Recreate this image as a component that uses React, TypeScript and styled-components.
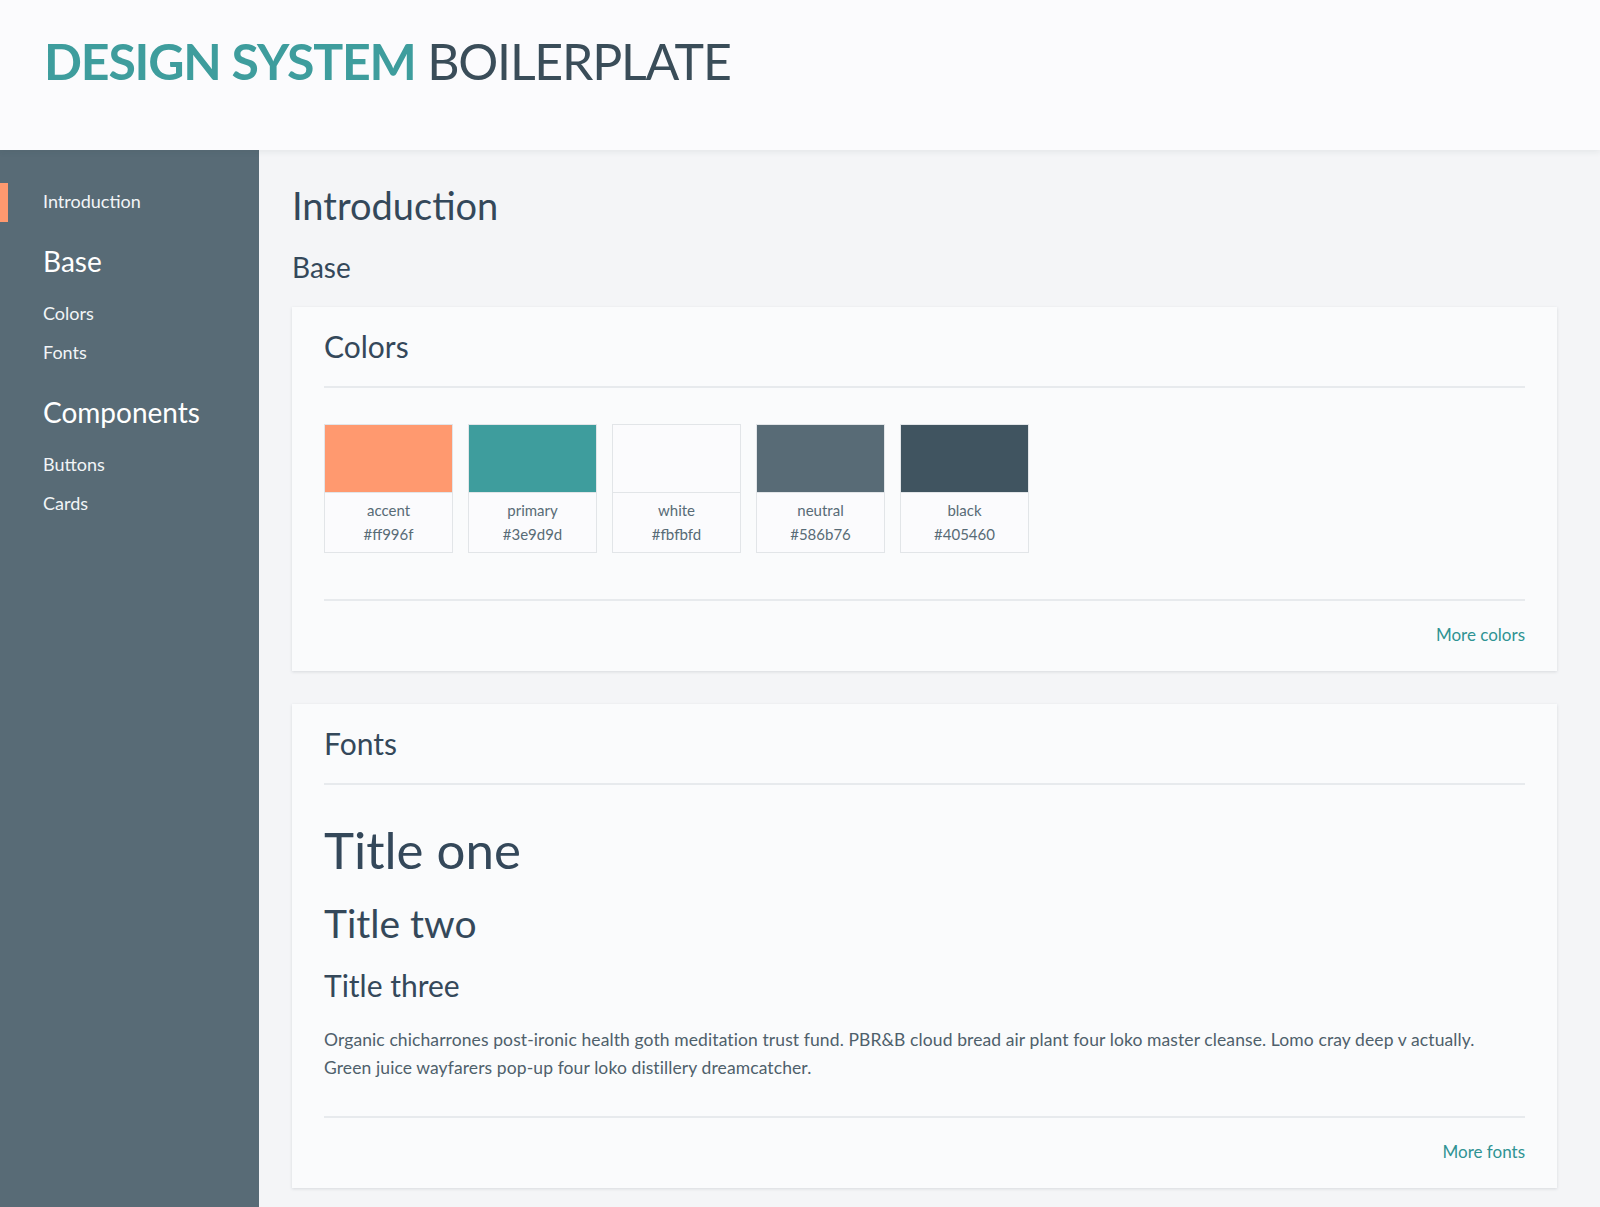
import React from "react";
import styled, { createGlobalStyle } from "styled-components";

const GlobalStyle = createGlobalStyle`
  * { box-sizing: border-box; }
  body {
    margin: 0;
    background: #f4f5f7;
    font-family: Lato, "Liberation Sans", sans-serif;
    color: #3a4d59;
  }
`;

const swatches = [
  { name: "accent", hex: "#ff996f" },
  { name: "primary", hex: "#3e9d9d" },
  { name: "white", hex: "#fbfbfd" },
  { name: "neutral", hex: "#586b76" },
  { name: "black", hex: "#405460" },
];

export default function App() {
  return (
    <>
      <GlobalStyle />
      <Header>
        <Brand>
          <strong>DESIGN SYSTEM</strong> BOILERPLATE
        </Brand>
      </Header>
      <Layout>
        <Sidebar>
          <NavLink $active>Introduction</NavLink>
          <NavGroup>Base</NavGroup>
          <NavLink>Colors</NavLink>
          <NavLink>Fonts</NavLink>
          <NavGroup>Components</NavGroup>
          <NavLink>Buttons</NavLink>
          <NavLink>Cards</NavLink>
        </Sidebar>
        <Main>
          <PageTitle>Introduction</PageTitle>
          <SectionTitle>Base</SectionTitle>

          <Card>
            <CardHeader>Colors</CardHeader>
            <CardBody $top={36} $bottom={46}>
              <SwatchRow>
                {swatches.map((s) => (
                  <Swatch key={s.name}>
                    <SwatchColor style={{ background: s.hex }} />
                    <SwatchLabel>
                      <span>{s.name}</span>
                      <span>{s.hex}</span>
                    </SwatchLabel>
                  </Swatch>
                ))}
              </SwatchRow>
            </CardBody>
            <CardFooter>
              <MoreLink href="#">More colors</MoreLink>
            </CardFooter>
          </Card>

          <Card>
            <CardHeader>Fonts</CardHeader>
            <CardBody $top={34} $bottom={34}>
              <TitleSample $size={51}>Title one</TitleSample>
              <TitleSample $size={39}>Title two</TitleSample>
              <TitleSample $size={30}>Title three</TitleSample>
              <Paragraph>
                Organic chicharrones post-ironic health goth meditation trust fund. PBR&amp;B cloud bread air
                plant four loko master cleanse. Lomo cray deep v actually. Green juice wayfarers pop-up four
                loko distillery dreamcatcher.
              </Paragraph>
            </CardBody>
            <CardFooter>
              <MoreLink href="#">More fonts</MoreLink>
            </CardFooter>
          </Card>
        </Main>
      </Layout>
    </>
  );
}

const Header = styled.header`
  height: 150px;
  background: #fbfbfd;
  display: flex;
  align-items: center;
  padding: 0 0 28px 44px;
  box-shadow: 0 2px 6px rgba(40, 60, 70, 0.08);
  position: relative;
  z-index: 1;
`;

const Brand = styled.h1`
  margin: 0;
  font-size: 50px;
  font-weight: 400;
  color: #3a4d59;
  letter-spacing: -1.2px;

  strong {
    color: #3e9d9d;
    font-weight: 700;
  }
`;

const Layout = styled.div`
  display: flex;
  min-height: 1057px;
`;

const Sidebar = styled.nav`
  width: 259px;
  flex-shrink: 0;
  background: #586b76;
  padding-top: 33px;
  display: flex;
  flex-direction: column;
`;

const NavLink = styled.a<{ $active?: boolean }>`
  display: block;
  height: 39px;
  line-height: 37px;
  font-size: 18px;
  color: #f2f5f7;
  text-decoration: none;
  border-left: 8px solid ${(p) => (p.$active ? "#ff996f" : "transparent")};
  padding-left: 35px;
`;

const NavGroup = styled.div`
  font-size: 28px;
  line-height: 34px;
  color: #ffffff;
  padding-left: 43px;
  margin: 22px 0 17px;
`;

const Main = styled.main`
  flex: 1;
  padding: 32px 43px 20px 33px;
`;

const PageTitle = styled.h1`
  margin: 0 0 22px;
  font-size: 38px;
  line-height: 46px;
  font-weight: 400;
  color: #34485a;
`;

const SectionTitle = styled.h2`
  margin: 0 0 23px;
  font-size: 28px;
  line-height: 34px;
  font-weight: 400;
  color: #34485a;
`;

const Card = styled.section`
  background: #fafbfc;
  padding: 0 32px;
  box-shadow: 0 1px 3px rgba(40, 60, 70, 0.14);
  margin-bottom: 33px;
`;

const CardHeader = styled.h3`
  margin: 0;
  padding: 21px 0 22px;
  font-size: 30px;
  line-height: 36px;
  font-weight: 400;
  color: #34485a;
  border-bottom: 2px solid #e7eaed;
`;

const CardBody = styled.div<{ $top: number; $bottom: number }>`
  padding: ${(p) => p.$top}px 0 ${(p) => p.$bottom}px;
  border-bottom: 2px solid #e7eaed;
`;

const SwatchRow = styled.div`
  display: flex;
  gap: 15px;
`;

const Swatch = styled.div`
  width: 129px;
  border: 1px solid #e2e5e8;
  background: #fbfbfd;
`;

const SwatchColor = styled.div`
  height: 68px;
  border-bottom: 1px solid #e2e5e8;
`;

const SwatchLabel = styled.div`
  display: flex;
  flex-direction: column;
  align-items: center;
  padding: 5px 0 6px;
  font-size: 15px;
  line-height: 24px;
  color: #586b76;
`;

const TitleSample = styled.div<{ $size: number }>`
  font-size: ${(p) => p.$size}px;
  line-height: 1.2;
  color: #34485a;
  margin-bottom: 20px;
`;

const Paragraph = styled.p`
  margin: 23px 0 0;
  font-size: 17.5px;
  line-height: 28px;
  letter-spacing: 0.1px;
  color: #4e606b;
  max-width: 1170px;
`;

const CardFooter = styled.div`
  display: flex;
  justify-content: flex-end;
  padding: 22px 0 24px;
`;

const MoreLink = styled.a`
  font-size: 17px;
  line-height: 24px;
  color: #2f9393;
  text-decoration: none;
`;
